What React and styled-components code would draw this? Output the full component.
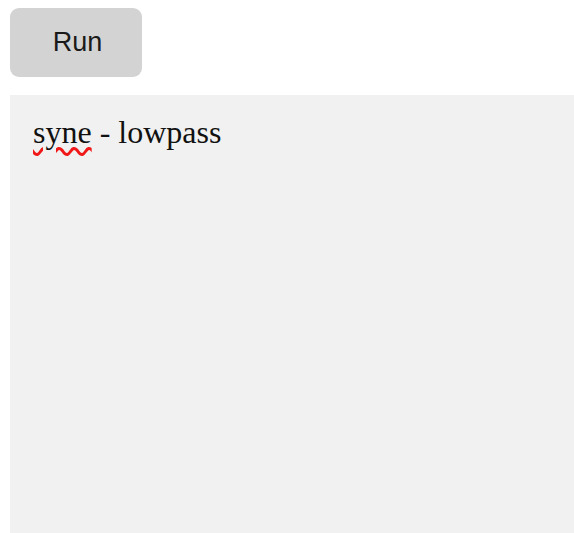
import React, { useState } from 'react';
import styled, { createGlobalStyle } from 'styled-components';

const GlobalStyle = createGlobalStyle`
  html, body {
    margin: 0;
    padding: 0;
    background: #fff;
    overflow: hidden;
  }
`;

const Page = styled.div`
  display: flex;
  flex-direction: column;
  align-items: flex-start;
  gap: 18px;
  height: 533px;
  padding: 8px 0 0 10px;
  box-sizing: border-box;
`;

const RunButton = styled.button`
  width: 132px;
  height: 69px;
  padding: 0 0 0 3px;
  border: none;
  border-radius: 9px;
  background-color: #d3d3d3;
  color: #1a1a1a;
  font-family: "Liberation Sans", Arial, sans-serif;
  font-size: 27px;
  cursor: pointer;
  &:hover {
    background-color: #c8c8c8;
  }
`;

const Editor = styled.div`
  flex: 1;
  align-self: stretch;
  background-color: #f1f1f1;
  padding: 19px 23px;
  font-family: "Liberation Serif", "Times New Roman", serif;
  font-size: 32px;
  color: #111;
  outline: none;
`;

const Misspelled = styled.span`
  text-decoration: underline wavy #f01818;
  text-decoration-thickness: 3px;
  text-underline-offset: 4px;
  text-decoration-skip-ink: auto;
`;

const App = () => {
  const [runs, setRuns] = useState(0);

  return (
    <>
      <GlobalStyle />
      <Page>
        <RunButton onClick={() => setRuns(runs + 1)}>Run</RunButton>
        <Editor>
          <Misspelled>syne</Misspelled> - lowpass
        </Editor>
      </Page>
    </>
  );
};

export default App;
